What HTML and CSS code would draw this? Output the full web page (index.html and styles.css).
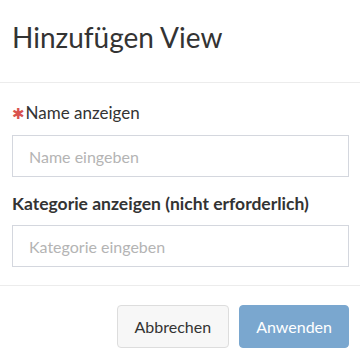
FILE: index.html
```html
<!DOCTYPE html>
<html lang="de">
    <head>
        <meta charset="UTF-8">
        <meta name="viewport" content="width=device-width, initial-scale=1.0">
        <title>Hinzufügen View</title>
        <link rel="stylesheet" href="styles.css">
    </head>
    <body>
        <div class="dialog">
            <div class="dialog-header">
                <h2 class="dialog-title">Hinzufügen View</h2>
            </div>
            <div class="dialog-body">
                <label class="field-label" for="viewName"><span class="required">&#10033;</span>Name anzeigen</label>
                <input class="field-input" id="viewName" type="text" placeholder="Name eingeben">
                <label class="field-label bold" for="viewCategory">Kategorie anzeigen (nicht erforderlich)</label>
                <input class="field-input" id="viewCategory" type="text" placeholder="Kategorie eingeben">
            </div>
            <div class="dialog-footer">
                <button class="btn btn-default">Abbrechen</button>
                <button class="btn btn-primary" disabled>Anwenden</button>
            </div>
        </div>
    </body>
</html>
```

FILE: styles.css
```css
body {
    margin: 0;
    background-color: #fff;
    font-family: Lato, "Open Sans", sans-serif;
    color: #333;
}
.dialog {
    width: 360px;
}
.dialog-header {
    padding: 16px 12px 24px 12px;
    border-bottom: 1px solid #ececec;
}
.dialog-title {
    margin: 0;
    font-size: 28px;
    font-weight: 400;
    line-height: 42px;
}
.dialog-body {
    display: flex;
    flex-direction: column;
    padding: 18px 11px 18px 12px;
}
.field-label {
    font-size: 17px;
    line-height: 24px;
    margin-bottom: 9px;
}
.field-label.bold {
    font-size: 17.5px;
    font-weight: 700;
    margin-top: 15px;
}
.required {
    color: #d9534f;
    font-family: "DejaVu Sans", sans-serif;
    font-size: 15px;
    margin-right: 1px;
}
.field-input {
    height: 42px;
    box-sizing: border-box;
    border: 1px solid #d4d7de;
    padding: 0 16px;
    font-family: inherit;
    font-size: 16px;
    color: #333;
    outline: none;
}
.field-input::placeholder {
    color: #b4b4b4;
}
.dialog-footer {
    display: flex;
    justify-content: flex-end;
    gap: 10px;
    padding: 19px 11px 15px 12px;
    border-top: 1px solid #ececec;
}
.btn {
    height: 43px;
    padding: 0 16px;
    font-family: inherit;
    font-size: 16px;
    border-radius: 4px;
    border: 1px solid #ddd;
}
.btn-default {
    padding: 0 17px;
    background-color: #f7f7f7;
    color: #333;
}
.btn-primary {
    background-color: #7aa7cf;
    border-color: #7aa7cf;
    color: #fff;
}
```
